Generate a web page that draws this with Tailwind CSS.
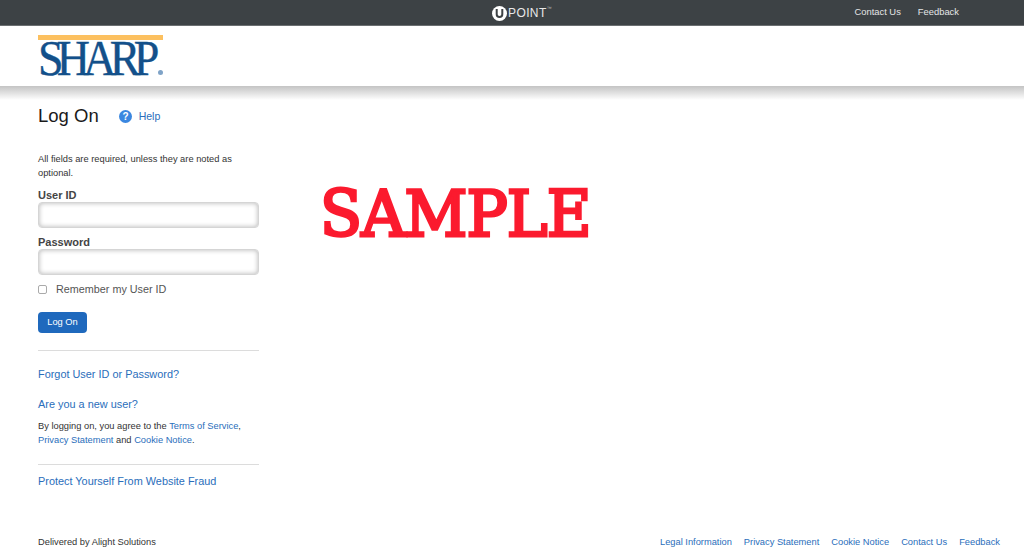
<!DOCTYPE html>
<html lang="en">
<head>
  <meta charset="UTF-8" />
  <meta name="viewport" content="width=device-width, initial-scale=1.0" />
  <title>Log On</title>
  <script src="https://cdn.jsdelivr.net/npm/@tailwindcss/browser@4"></script>
</head>
<body class="bg-white font-['Liberation_Sans',Arial,sans-serif] text-[#333]">
  <div class="relative h-[559px] w-[1024px] overflow-hidden flex flex-col">

    <!-- top bar -->
    <div class="relative h-[26px] shrink-0 bg-[#3d4245] border-b border-[#6b6f71] text-[9.4px] text-[#e4e5e6]">
      <div class="absolute left-[492px] top-[4px] flex items-center text-white">
        <svg width="15" height="15" viewBox="0 0 15 15">
          <circle cx="7.5" cy="7.5" r="7.5" fill="#fff" />
          <path d="M4.7 3v5.2a2.8 2.8 0 0 0 5.6 0V3" fill="none" stroke="#3d4245" stroke-width="2" />
        </svg>
        <span class="ml-[1px] text-[12px] tracking-[0.4px] text-[#e8e8e8]">POINT</span>
        <span class="text-[5px] -mt-2 text-[#bbb]">™</span>
      </div>
      <div class="flex justify-end gap-[17px] pr-[65px] h-full items-center">
        <a>Contact Us</a>
        <a>Feedback</a>
      </div>
    </div>

    <!-- logo band -->
    <div class="h-[60px] shrink-0 pl-[38px] pt-[9px] bg-white">
      <div class="relative w-[125px]">
        <div class="h-[5px] w-[125px] bg-[#fcc05f]"></div>
        <div class="font-['Liberation_Serif',serif] mt-[1px] text-[50px] leading-[35px] origin-left scale-x-[0.92] tracking-[-7.3px] [-webkit-text-stroke:0.4px_#13508a] text-[#13508a] whitespace-nowrap">SHARP</div>
        <span class="absolute right-0 top-[35px] h-[5px] w-[5px] rounded-full bg-[#7fa3c7]"></span>
      </div>
    </div>
    <div class="h-[14px] shrink-0 bg-gradient-to-b from-[#c4c4c4] to-white"></div>

    <!-- main column -->
    <div class="flex-1 pl-[38px] w-[259px] box-content">
      <div class="w-[221px]">
        <div class="flex items-center mt-[2px] h-[28px]">
          <h1 class="text-[18.5px] text-[#1a1a1a]">Log On</h1>
          <svg class="ml-[20px] mt-[1px]" width="13" height="13" viewBox="0 0 13 13">
            <circle cx="6.5" cy="6.5" r="6.5" fill="#3a87e0" />
            <text x="6.5" y="10" text-anchor="middle" font-size="10" font-weight="700" fill="#fff" font-family="Liberation Sans">?</text>
          </svg>
          <a class="ml-[7px] mt-[2px] text-[10.5px] text-[#2a6ebb]">Help</a>
        </div>

        <p class="mt-[22px] text-[9.3px] leading-[14px] text-[#333]">All fields are required, unless they are noted as optional.</p>

        <label class="block mt-[9px] text-[11px] leading-[13px] font-bold text-[#444]">User ID</label>
        <input type="text" class="block w-[221px] h-[26px] rounded-[4px] border border-[#d5d5d5] shadow-[inset_0_0_5px_#b5b5b5]" />

        <label class="block mt-[8px] text-[11px] leading-[13px] font-bold text-[#444]">Password</label>
        <input type="password" class="block w-[221px] h-[26px] rounded-[4px] border border-[#d5d5d5] shadow-[inset_0_0_5px_#b5b5b5]" />

        <div class="flex items-center mt-[7px] h-[14px] text-[10.8px] text-[#555]">
          <span class="h-[9px] w-[9px] rounded-[2px] border border-[#aaa] bg-white"></span>
          <span class="ml-[9px]">Remember my User ID</span>
        </div>

        <button class="block mt-[16px] h-[21px] w-[49px] rounded-[4px] bg-[#1f69bd] text-[9.3px] text-white">Log On</button>

        <div class="mt-[17px] border-t border-[#dcdcdc]"></div>
        <a class="block mt-[16px] text-[10.9px] leading-[14px] text-[#2a6ebb]">Forgot User ID or Password?</a>
        <a class="block mt-[16px] text-[10.9px] leading-[14px] text-[#2a6ebb]">Are you a new user?</a>
        <p class="mt-[8px] text-[9.3px] leading-[14px] text-[#333]">By logging on, you agree to the <a class="text-[#2a6ebb]">Terms of Service</a>, <a class="text-[#2a6ebb]">Privacy Statement</a> and <a class="text-[#2a6ebb]">Cookie Notice</a>.</p>
        <div class="mt-[17px] border-t border-[#dcdcdc]"></div>
        <a class="block mt-[9px] text-[10.9px] leading-[14px] text-[#2a6ebb]">Protect Yourself From Website Fraud</a>
      </div>
    </div>

    <!-- footer -->
    <div class="absolute bottom-[11px] left-[38px] right-[24px] flex justify-between text-[9.3px] leading-[12px]">
      <span class="text-[#333]">Delivered by Alight Solutions</span>
      <div class="flex gap-[12px] text-[#2a6ebb]">
        <a>Legal Information</a>
        <a>Privacy Statement</a>
        <a>Cookie Notice</a>
        <a>Contact Us</a>
        <a>Feedback</a>
      </div>
    </div>

    <!-- watermark -->
    <div class="absolute left-[320px] top-[174px] font-[DejaVu_Serif] text-[64px] leading-[80px] tracking-[-1px] origin-left scale-x-[0.96] [-webkit-text-stroke:3px_#fb1a2e] text-[#fb1a2e] whitespace-nowrap">SAMPLE</div>
  </div>
</body>
</html>
